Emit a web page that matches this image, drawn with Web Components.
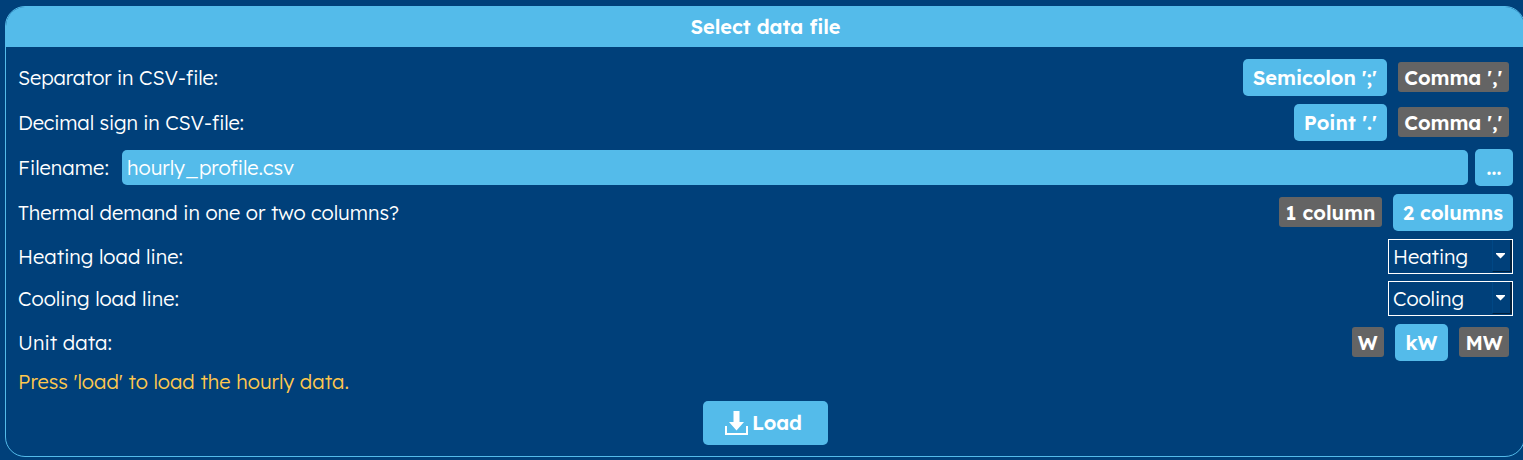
<!DOCTYPE html>
<html lang="en">
<head>
<meta charset="utf-8">
<title>Select data file</title>
<style>
html,body{margin:0;height:460px;overflow:hidden;background:#00407a;color:#fff}
body{font:300 20px/26px Lexend,Lato,"Open Sans",sans-serif}
</style>
</head>
<body>
<data-panel>
  <fit-text slot="title" w="150">Select data file</fit-text>
  <form-row><fit-text slot="label" w="200">Separator in CSV-file:</fit-text>
    <option-button active style="width:143.5px"><fit-text w="124">Semicolon ';'</fit-text></option-button>
    <option-button style="width:111.5px"><fit-text w="98">Comma ','</fit-text></option-button></form-row>
  <form-row><fit-text slot="label" w="226">Decimal sign in CSV-file:</fit-text>
    <option-button active style="width:92.5px"><fit-text w="73">Point '.'</fit-text></option-button>
    <option-button style="width:111.5px"><fit-text w="98">Comma ','</fit-text></option-button></form-row>
  <form-row><fit-text slot="label" w="91">Filename:</fit-text>
    <file-field><fit-text w="167">hourly_profile.csv</fit-text></file-field>
    <option-button active style="width:38px"><fit-text w="15">...</fit-text></option-button></form-row>
  <form-row><fit-text slot="label" w="381">Thermal demand in one or two columns?</fit-text>
    <option-button style="width:103px"><fit-text w="90">1 column</fit-text></option-button>
    <option-button active style="width:120px"><fit-text w="100">2 columns</fit-text></option-button></form-row>
  <form-row style="height:35px;margin-bottom:7px"><fit-text slot="label" w="165">Heating load line:</fit-text>
    <select-box><fit-text w="75">Heating</fit-text></select-box></form-row>
  <form-row style="height:35px"><fit-text slot="label" w="161">Cooling load line:</fit-text>
    <select-box><fit-text w="71">Cooling</fit-text></select-box></form-row>
  <form-row><fit-text slot="label" w="94">Unit data:</fit-text>
    <option-button style="width:32.5px"><fit-text w="20">W</fit-text></option-button>
    <option-button active style="width:53px"><fit-text w="32">kW</fit-text></option-button>
    <option-button style="width:50px"><fit-text w="37">MW</fit-text></option-button></form-row>
  <form-row style="height:26px;margin-bottom:6px;color:#ffc84e"><fit-text slot="label" w="331">Press 'load' to load the hourly data.</fit-text></form-row>
  <load-button><fit-text w="50">Load</fit-text></load-button>
</data-panel>
<script>
const define = (name, html, setup) => customElements.define(name, class extends HTMLElement {
  constructor(){ super(); this.attachShadow({mode:'open'}).innerHTML = html; }
  connectedCallback(){ if (setup) setup(this); }
});

define('data-panel', `<style>
:host{display:flex;flex-direction:column;box-sizing:border-box;width:1520px;height:451px;margin:6px 0 0 5px;border:1px solid #54bbea;border-radius:20px;overflow:hidden}
header{height:40px;flex:none;background:#54bbea;display:flex;align-items:center;justify-content:center;font-weight:600;padding-left:1px}
main{display:flex;flex-direction:column;padding:12px 11px 0 12px}
</style><header><slot name="title"></slot></header><main><slot></slot></main>`);

define('form-row', `<style>
:host{display:flex;align-items:center;height:37px;margin-bottom:8px}
.controls{flex:1;display:flex;justify-content:flex-end;align-items:center;gap:7px}
</style><slot name="label"></slot><div class="controls"><slot></slot></div>`);

define('option-button', `<style>
:host{display:flex;box-sizing:border-box;flex:none;align-items:center;justify-content:center;height:30px;margin:0 4px 1px;border-radius:3px;background:#646464;font-weight:600}
:host(:not([active])){padding-top:1px}
:host([active]){height:37px;margin:0;border-radius:5px;background:#54bbea}
</style><slot></slot>`);

define('file-field', `<style>
:host{display:flex;flex:1;align-items:center;height:35px;margin-left:13px;padding-left:5px;background:#54bbea;border-radius:5px}
</style><slot></slot>`);

define('select-box', `<style>
:host{display:flex;box-sizing:border-box;justify-content:space-between;align-items:center;width:125px;height:35px;border:1px solid #fff;padding-left:4px}
.arrow{display:flex;align-items:center;justify-content:center;box-sizing:border-box;width:20px;height:32px;margin-bottom:1px;padding-right:2px;border-right:2px solid #00203d;border-bottom:1px solid #00203d;border-left:1px solid #004886}
svg{display:block}
</style><slot></slot><span class="arrow"><svg width="9" height="6" viewBox="0 0 9 6"><path d="M0 0H9V1L4.5 5.5L0 1Z" fill="#fff"/></svg></span>`);

define('load-button', `<style>
:host{display:flex;box-sizing:border-box;align-items:center;align-self:center;width:125px;height:44px;padding-left:22px;gap:4px;background:#54bbea;border-radius:5px;font-weight:600}
svg{display:block;margin-bottom:1px}
</style><svg width="23" height="24" viewBox="0 0 23 24" fill="#fff"><path d="M8.5 0H14.5V11H19L11.5 19.5L4 11H8.5Z"/><path d="M0 15H2V22H21V15H23V24H0Z"/></svg><slot></slot>`);

/* Tracks its text so that a line takes the width given in "w". */
define('fit-text', `<style>
:host{display:block;flex:none;white-space:pre}
span{display:inline-block}
</style><span><slot></slot></span>`, el => {
  const span = el.shadowRoot.querySelector('span');
  const width = +el.getAttribute('w');
  const spacing = (width - span.getBoundingClientRect().width) / el.textContent.length;
  span.style.letterSpacing = spacing + 'px';
  el.style.width = width + 'px';
});
</script>
</body>
</html>
